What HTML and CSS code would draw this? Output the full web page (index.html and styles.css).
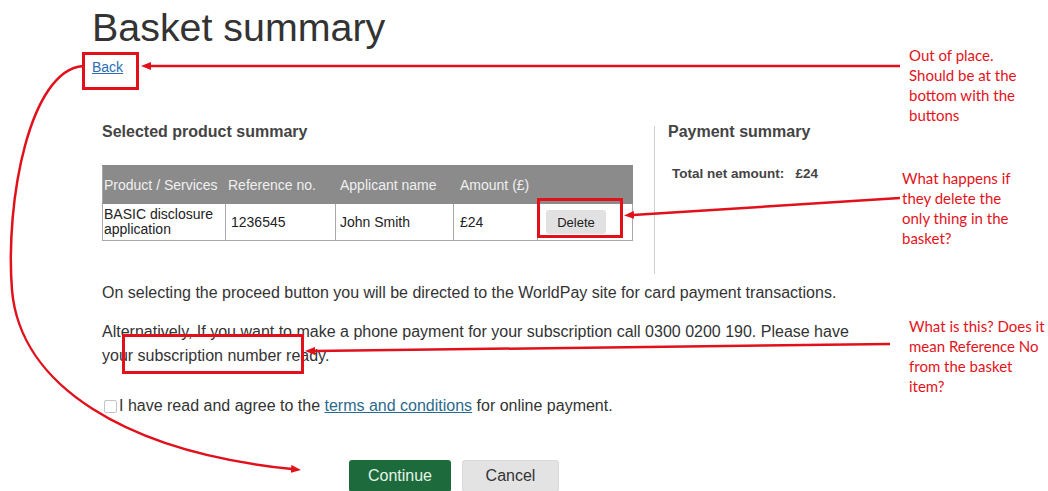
FILE: index.html
```html
<!DOCTYPE html>
<html lang="en">
<head>
<meta charset="utf-8">
<title>Basket summary</title>
<link rel="stylesheet" href="styles.css">
</head>
<body>
<div class="page">
  <h1 class="title">Basket summary</h1>
  <a class="back" href="#">Back</a>

  <div class="summary">
    <section class="products">
      <h2 class="section-title">Selected product summary</h2>
      <table class="basket">
        <colgroup>
          <col class="col-product">
          <col class="col-ref">
          <col class="col-name">
          <col class="col-amount">
          <col class="col-action">
        </colgroup>
        <thead>
          <tr>
            <th class="c1">Product / Services</th>
            <th class="c2">Reference no.</th>
            <th class="c3">Applicant name</th>
            <th class="c4">Amount (£)</th>
            <th class="c5"></th>
          </tr>
        </thead>
        <tbody>
          <tr>
            <td class="c1 product">BASIC disclosure application</td>
            <td class="c2 ref">1236545</td>
            <td class="c3">John Smith</td>
            <td class="c4">£24</td>
            <td class="c5"><button class="delete" type="button">Delete</button></td>
          </tr>
        </tbody>
      </table>
    </section>

    <aside class="payment">
      <h2 class="section-title">Payment summary</h2>
      <p class="total">Total net amount:&nbsp;&nbsp; £24</p>
    </aside>
  </div>

  <p class="info">On selecting the proceed button you will be directed to the WorldPay site for card payment transactions.</p>
  <p class="info">Alternatively, If you want to make a phone payment for your subscription call 0300 0200 190. Please have your subscription number ready.</p>

  <label class="agree"><input type="checkbox" class="check">I have read and agree to the&nbsp;<a href="#">terms and conditions</a>&nbsp;for online payment.</label>

  <div class="actions">
    <button class="btn btn-primary" type="button">Continue</button>
    <button class="btn btn-secondary" type="button">Cancel</button>
  </div>

  <!-- review markup drawn over the page -->
  <div class="markup">
    <svg class="markup-lines" width="1048" height="491" viewBox="0 0 1048 491">
      <defs>
        <marker id="head" markerWidth="10" markerHeight="8" refX="1" refY="4" orient="auto" markerUnits="userSpaceOnUse">
          <path d="M0 0 L10 4 L0 8 Z" fill="#e1101a"/>
        </marker>
      </defs>
      <g fill="none" stroke="#e1101a" stroke-width="3">
        <rect x="83.5" y="53.5" width="54" height="35"/>
        <rect x="538.5" y="199.5" width="83" height="37"/>
        <rect x="123.5" y="335.5" width="179" height="37"/>
      </g>
      <g fill="none" stroke="#e1101a" stroke-width="2.5">
        <path d="M900 66 L150 66" marker-end="url(#head)"/>
        <path d="M900 198 L633 215" marker-end="url(#head)"/>
        <path d="M890 344 L314 351" marker-end="url(#head)"/>
        <path d="M83 66 C30 70 5 200 12 290 C20 385 125 452 292 469" marker-end="url(#head)"/>
      </g>
    </svg>
    <p class="note note-back">Out of place.<br>Should be at the<br>bottom with the<br>buttons</p>
    <p class="note note-delete">What happens if<br>they delete the<br>only thing in the<br>basket?</p>
    <p class="note note-sub">What is this? Does it<br>mean Reference No<br>from the basket<br>item?</p>
  </div>
</div>
</body>
</html>
```

FILE: styles.css
```css
html, body {
  margin: 0;
  background: #fff;
}

body {
  font-family: "Liberation Sans", Arial, Helvetica, sans-serif;
  color: #333;
}

.page {
  position: relative;
  width: 1048px;
  height: 491px;
  overflow: hidden;
  padding-left: 92px;
  box-sizing: border-box;
}

/* heading and back link */
.title {
  margin: 5px 0 0;
  font-size: 39.4px;
  line-height: 45px;
  font-weight: normal;
  color: #333;
}

.back {
  display: block;
  width: fit-content;
  margin-top: 9px;
  font-size: 14px;
  line-height: 16px;
  color: #2d6db5;
  text-decoration: underline;
}

/* product table + payment summary */
.summary {
  display: flex;
  margin: 48px 0 0 10px;
}

.products {
  width: 530px;
}

.section-title {
  margin: 0;
  font-size: 16px;
  line-height: 18px;
  font-weight: bold;
  color: #444;
}

.basket {
  margin-top: 24px;
  width: 530px;
  border-collapse: collapse;
  table-layout: fixed;
  font-size: 14px;
}

.col-product { width: 123px; }
.col-ref { width: 110px; }
.col-name { width: 118px; }
.col-amount { width: 84px; }
.col-action { width: 95px; }

.basket th {
  height: 37px;
  padding: 0;
  background: #8b8b8b;
  color: #efefef;
  font-weight: normal;
  text-align: left;
  vertical-align: middle;
  border: 1px solid #8b8b8b;
  border-left-color: #a6a6a6;
}

.basket td {
  height: 36px;
  padding: 0;
  color: #222;
  vertical-align: middle;
  border: 1px solid #a9a9a9;
}

.basket .c1 { padding-left: 1px; }
.basket .c2 { padding-left: 2px; }
.basket .c3 { padding-left: 4px; }
.basket .c4 { padding-left: 6px; }
.basket .c5 { padding-left: 8px; }

.basket td.ref { padding-left: 5px; }

.basket .product {
  line-height: 15px;
}

.delete {
  width: 60px;
  height: 24px;
  padding: 0;
  border: none;
  border-radius: 3px;
  background: #e1e1e1;
  color: #222;
  font: 13px "Liberation Sans", Arial, sans-serif;
}

.payment {
  margin: 3px 0 0 22px;
  padding-left: 13px;
  height: 148px;
  border-left: 1px solid #cfcfcf;
}

.payment .section-title {
  margin-top: -3px;
}

.total {
  margin: 25px 0 0 4px;
  font-size: 13.5px;
  line-height: 16px;
  font-weight: bold;
  color: #444;
}

/* payment notes */
.info {
  margin: 7px 0 0 10px;
  width: 750px;
  font-size: 16px;
  line-height: 24px;
  color: #333;
}

.info + .info {
  margin-top: 15px;
}

.agree {
  display: flex;
  align-items: center;
  margin: 26px 0 0 12px;
  font-size: 16px;
  line-height: 24px;
  color: #333;
}

.check {
  appearance: none;
  width: 13px;
  height: 13px;
  margin: 0 2px 0 0;
  border: 1px solid #c4c4c4;
  border-radius: 2px;
  background: #fff;
}

.agree a {
  color: #2b6a8d;
  text-decoration: underline;
}

/* form buttons */
.actions {
  display: flex;
  gap: 11px;
  margin: 42px 0 0 257px;
}

.btn {
  height: 32px;
  padding: 0;
  border-radius: 3px;
  font: 16px "Liberation Sans", Arial, sans-serif;
}

.btn-primary {
  width: 102px;
  border: none;
  background: #1d6a3d;
  color: #e4f5e7;
}

.btn-secondary {
  width: 97px;
  border: 1px solid #d8d8d8;
  background: #e3e3e3;
  color: #333;
}

/* review markup layer */
.markup {
  position: absolute;
  top: 0;
  left: 0;
  width: 1048px;
  height: 491px;
  pointer-events: none;
}

.markup-lines {
  position: absolute;
  top: 0;
  left: 0;
}

.note {
  position: absolute;
  margin: 0;
  font-family: Lato, "Open Sans", sans-serif;
  font-size: 15px;
  line-height: 20px;
  color: #e3131b;
}

.note-back { top: 45px; left: 909px; }
.note-delete { top: 168px; left: 902px; }
.note-sub { top: 316px; left: 909px; }
```
